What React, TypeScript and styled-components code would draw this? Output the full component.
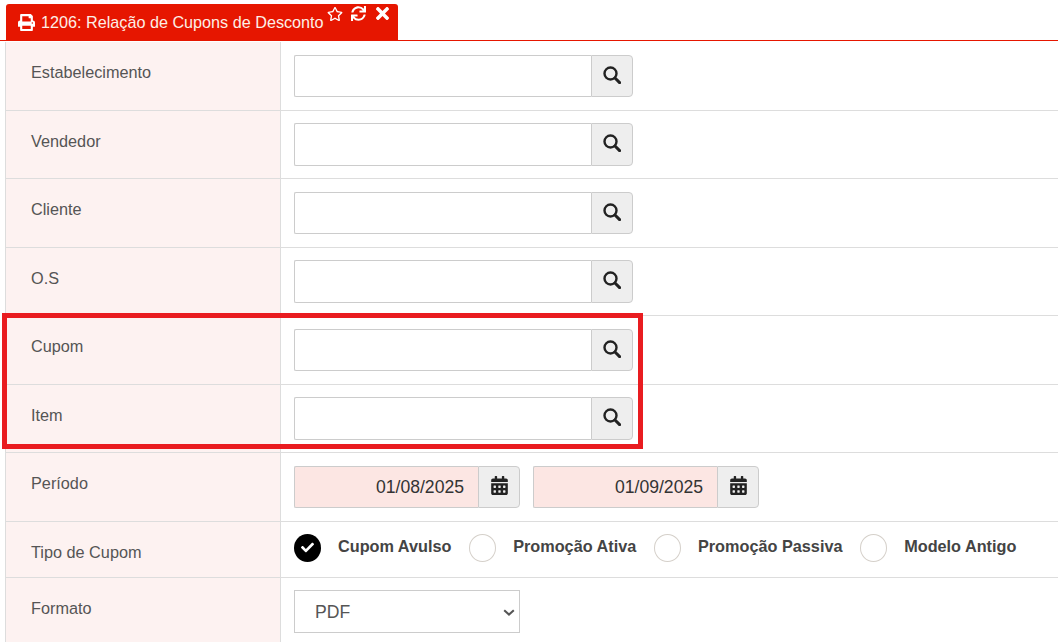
import { createGlobalStyle, styled } from "styled-components";
import { FaCalendarAlt, FaCheck, FaPrint, FaRegStar, FaSync, FaTimes } from "react-icons/fa";

const lookupFields = ["Estabelecimento", "Vendedor", "Cliente", "O.S", "Cupom", "Item"];
const couponTypes = ["Cupom Avulso", "Promoção Ativa", "Promoção Passiva", "Modelo Antigo"];

function SearchIcon() {
  return (
    <svg width="18" height="18" viewBox="0 0 18 18" fill="none" stroke="#222">
      <circle cx="7.5" cy="7.5" r="6" strokeWidth="2.4" />
      <path d="M12 12l4.6 4.6" strokeWidth="3" strokeLinecap="round" />
    </svg>
  );
}

export default function App() {
  return (
    <Page>
      <GlobalStyle />
      <TabBar>
        <Tab>
          <FaPrint size={17} />
          <TabTitle>1206: Relação de Cupons de Desconto</TabTitle>
          <TabActions>
            <FaRegStar size={16} />
            <FaSync size={15} />
            <FaTimes size={19} />
          </TabActions>
        </Tab>
      </TabBar>
      <Form>
        {lookupFields.map((field) => (
          <Row key={field} $height={68.5}>
            <Label>{field}</Label>
            <Cell>
              <InputGroup>
                <TextInput type="text" />
                <Addon>
                  <SearchIcon />
                </Addon>
              </InputGroup>
            </Cell>
          </Row>
        ))}
        <Row $height={68.5}>
          <Label>Período</Label>
          <Cell>
            <DateGroup>
              <DateInput>01/08/2025</DateInput>
              <Addon>
                <FaCalendarAlt size={19} />
              </Addon>
            </DateGroup>
            <DateGroup>
              <DateInput>01/09/2025</DateInput>
              <Addon>
                <FaCalendarAlt size={19} />
              </Addon>
            </DateGroup>
          </Cell>
        </Row>
        <Row $height={56}>
          <Label>Tipo de Cupom</Label>
          <RadioCell>
            {couponTypes.map((type, i) => (
              <RadioOption key={type}>
                <RadioMark $checked={i === 0}>{i === 0 && <FaCheck size={13} />}</RadioMark>
                <RadioText>{type}</RadioText>
              </RadioOption>
            ))}
          </RadioCell>
        </Row>
        <Row $height={65}>
          <Label>Formato</Label>
          <Cell>
            <SelectWrap>
              <FormatSelect defaultValue="PDF">
                <option>PDF</option>
              </FormatSelect>
              <SelectArrow width="12" height="7" viewBox="0 0 12 7" fill="none" stroke="#555">
                <path d="M1.2 1.2L6 5.6l4.8-4.4" strokeWidth="2" />
              </SelectArrow>
            </SelectWrap>
          </Cell>
        </Row>
      </Form>
      <Highlight />
    </Page>
  );
}

const GlobalStyle = createGlobalStyle`
  html, body {
    margin: 0;
    padding: 0;
    background: #fff;
    overflow: hidden;
  }
  * {
    box-sizing: border-box;
  }
`;

const Page = styled.div`
  position: relative;
  width: 1058px;
  height: 642px;
  overflow: hidden;
  font-family: "Liberation Sans", Arial, sans-serif;
  font-size: 16.25px;
  color: #555;
`;

const TabBar = styled.div`
  height: 41px;
  padding: 4px 0 0 6px;
  border-bottom: 1px solid #e61600;
`;

const Tab = styled.div`
  position: relative;
  display: flex;
  align-items: center;
  gap: 6px;
  width: 392px;
  height: 37px;
  padding: 0 0 1px 12px;
  background: #e61600;
  border-radius: 3px 3px 0 0;
  color: #fff;
`;

const TabTitle = styled.span`
  color: #fdeee6;
  font-size: 16.2px;
  white-space: nowrap;
`;

const TabActions = styled.div`
  position: absolute;
  top: 0;
  right: 6px;
  display: flex;
  align-items: center;
  gap: 8px;

  svg:last-child {
    margin-left: -1px;
  }
`;

const Form = styled.div`
  margin: 1px 0 0 5px;
  border-left: 1px solid #ddd;
`;

const Row = styled.div<{ $height: number }>`
  display: grid;
  grid-template-columns: 275px 1fr;
  height: ${({ $height }) => $height}px;
  border-bottom: 1px solid #ddd;
`;

const Label = styled.div`
  padding: 21px 0 0 25px;
  background: #fdf2f1;
  border-right: 1px solid #ddd;
  line-height: 18px;
`;

const Cell = styled.div`
  display: flex;
  gap: 13px;
  padding: 12.5px 0 0 13px;
`;

const RadioCell = styled.div`
  display: flex;
  padding: 12px 0 0 13px;
`;

const InputGroup = styled.div`
  display: flex;
  width: 339px;
  height: 42.5px;
`;

const TextInput = styled.input`
  flex: 1;
  min-width: 0;
  border: 1px solid #ccc;
  border-right: 0;
  border-radius: 2px 0 0 2px;
  background: #fff;
`;

const Addon = styled.div`
  display: flex;
  align-items: center;
  justify-content: center;
  width: 42px;
  height: 100%;
  padding-bottom: 2px;
  background: #eee;
  border: 1px solid #ccc;
  border-radius: 0 4px 4px 0;
  color: #222;
`;

const DateGroup = styled.div`
  display: flex;
  width: 226px;
  height: 42.5px;
`;

const DateInput = styled.div`
  flex: 1;
  padding-right: 14px;
  background: #fce6e3;
  border: 1px solid #ccc;
  border-right: 0;
  border-radius: 2px 0 0 2px;
  color: #333;
  font-size: 17.6px;
  line-height: 40px;
  text-align: right;
`;

const RadioOption = styled.div`
  display: flex;
  margin-right: 17.7px;
`;

const RadioMark = styled.span<{ $checked: boolean }>`
  display: flex;
  align-items: center;
  justify-content: center;
  width: 27px;
  height: 28px;
  border-radius: 50%;
  border: ${({ $checked }) => ($checked ? "0" : "1px solid #d5d0ca")};
  background: ${({ $checked }) => ($checked ? "#000" : "#fff")};
  color: #fff;
`;

const RadioText = styled.span`
  margin-left: 17px;
  color: #444;
  font-weight: 700;
  line-height: 24px;
`;

const SelectWrap = styled.div`
  position: relative;
  width: 226px;
  height: 43px;
`;

const FormatSelect = styled.select`
  appearance: none;
  width: 100%;
  height: 100%;
  padding-left: 20px;
  border: 1px solid #ccc;
  border-radius: 0;
  background: #fff;
  color: #555;
  font-family: inherit;
  font-size: 17.6px;
`;

const SelectArrow = styled.svg`
  position: absolute;
  top: 19px;
  right: 5px;
  pointer-events: none;
`;

const Highlight = styled.div`
  position: absolute;
  top: 313px;
  left: 2px;
  width: 641px;
  height: 136px;
  border: 5px solid #e91c20;
  pointer-events: none;
`;
